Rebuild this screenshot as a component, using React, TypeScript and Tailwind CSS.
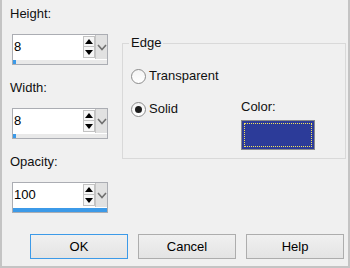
import React from "react";

function SpinField({ value, fill }: { value: string; fill: number }) {
  return (
    <div className="ml-[2px] w-[96px] h-[31px] border border-[#abadb3] bg-white flex flex-col">
      <div className="flex h-[24px]">
        <div className="w-[70px] pl-[1px] leading-[24px] text-black">{value}</div>
        <div className="w-[12px] flex flex-col pt-[1px]">
          <div className="h-[11px] border border-[#c2c2c2] bg-[#f6f6f6] flex items-center justify-center">
            <svg width="8" height="5" viewBox="0 0 8 5">
              <path d="M0 5 L4 0 L8 5 Z" fill="#000" />
            </svg>
          </div>
          <div className="h-[11px] border border-t-0 border-[#c2c2c2] bg-[#f6f6f6] flex items-center justify-center">
            <svg width="8" height="5" viewBox="0 0 8 5">
              <path d="M0 0 L8 0 L4 5 Z" fill="#000" />
            </svg>
          </div>
        </div>
        <div className="w-[12px] bg-[#e1e1e1] border-l border-[#c4c4c4] flex items-center justify-center">
          <svg width="10" height="7" viewBox="0 0 10 7">
            <path d="M1 1 L5 5.5 L9 1" fill="none" stroke="#707070" strokeWidth="1.6" />
          </svg>
        </div>
      </div>
      <div className="mt-[1px] h-[4px] bg-[#e9e9e9]">
        <div className="h-full bg-[#3c9ae8]" style={{ width: `${fill}%` }} />
      </div>
    </div>
  );
}

function Radio({ checked, label }: { checked?: boolean; label: string }) {
  return (
    <div className="flex items-center h-[16px]">
      <span className="w-[15px] h-[15px] rounded-full border border-[#8c8c8c] bg-gradient-to-b from-[#f4f4f4] to-white flex items-center justify-center">
        {checked && <span className="w-[7px] h-[7px] rounded-full bg-[#1c1c1c]" />}
      </span>
      <span className="ml-[3px] leading-[16px]">{label}</span>
    </div>
  );
}

function Btn({ label, primary }: { label: string; primary?: boolean }) {
  return (
    <button
      className={
        primary
          ? "w-[98px] h-[25px] border border-[#3c9ae8] bg-gradient-to-b from-[#f0f0f0] to-[#e4e4e4] text-black leading-[23px]"
          : "w-[98px] h-[25px] border border-[#adadad] bg-gradient-to-b from-[#f0f0f0] to-[#e4e4e4] text-black leading-[23px]"
      }
    >
      {label}
    </button>
  );
}

export default function App() {
  return (
    <div className="w-[350px] h-[268px] bg-[#f0f0f0] border-x-2 border-b-2 border-[#c4c4c4] flex flex-col font-['Liberation_Sans',Arial,sans-serif] text-[13px] text-[#111]">
      <div className="flex">
        {/* Left column: spin fields */}
        <div className="w-[120px] pl-[8px] pt-[6px] flex flex-col">
          <div className="h-[16px] leading-[16px]">Height:</div>
          <div className="mt-[12px]">
            <SpinField value="8" fill={3} />
          </div>
          <div className="mt-[15px] h-[16px] leading-[16px]">Width:</div>
          <div className="mt-[12px]">
            <SpinField value="8" fill={3} />
          </div>
          <div className="mt-[15px] h-[16px] leading-[16px]">Opacity:</div>
          <div className="mt-[12px]">
            <SpinField value="100" fill={100} />
          </div>
        </div>

        {/* Edge group */}
        <fieldset className="mt-[35px] w-[224px] h-[124px] border border-[#d9d9d9] pl-[8px]">
          <legend className="ml-[-2px] px-[2px] leading-[16px]">Edge</legend>
          <div className="mt-[17px]">
            <Radio label="Transparent" />
          </div>
          <div className="mt-[17px] flex">
            <div className="w-[110px]">
              <Radio checked label="Solid" />
            </div>
            <div className="flex flex-col mt-[-2px]">
              <div className="h-[16px] leading-[16px]">Color:</div>
              <div className="mt-[5px] w-[74px] h-[30px] border border-[#8a8a8a] bg-[#2c3b99] p-[2px]">
                <div className="w-full h-full border border-dotted border-[#f2e35a]" />
              </div>
            </div>
          </div>
        </fieldset>
      </div>

      {/* Buttons */}
      <div className="mt-[21px] pl-[28px] flex gap-[10px]">
        <Btn label="OK" primary />
        <Btn label="Cancel" />
        <Btn label="Help" />
      </div>
    </div>
  );
}
